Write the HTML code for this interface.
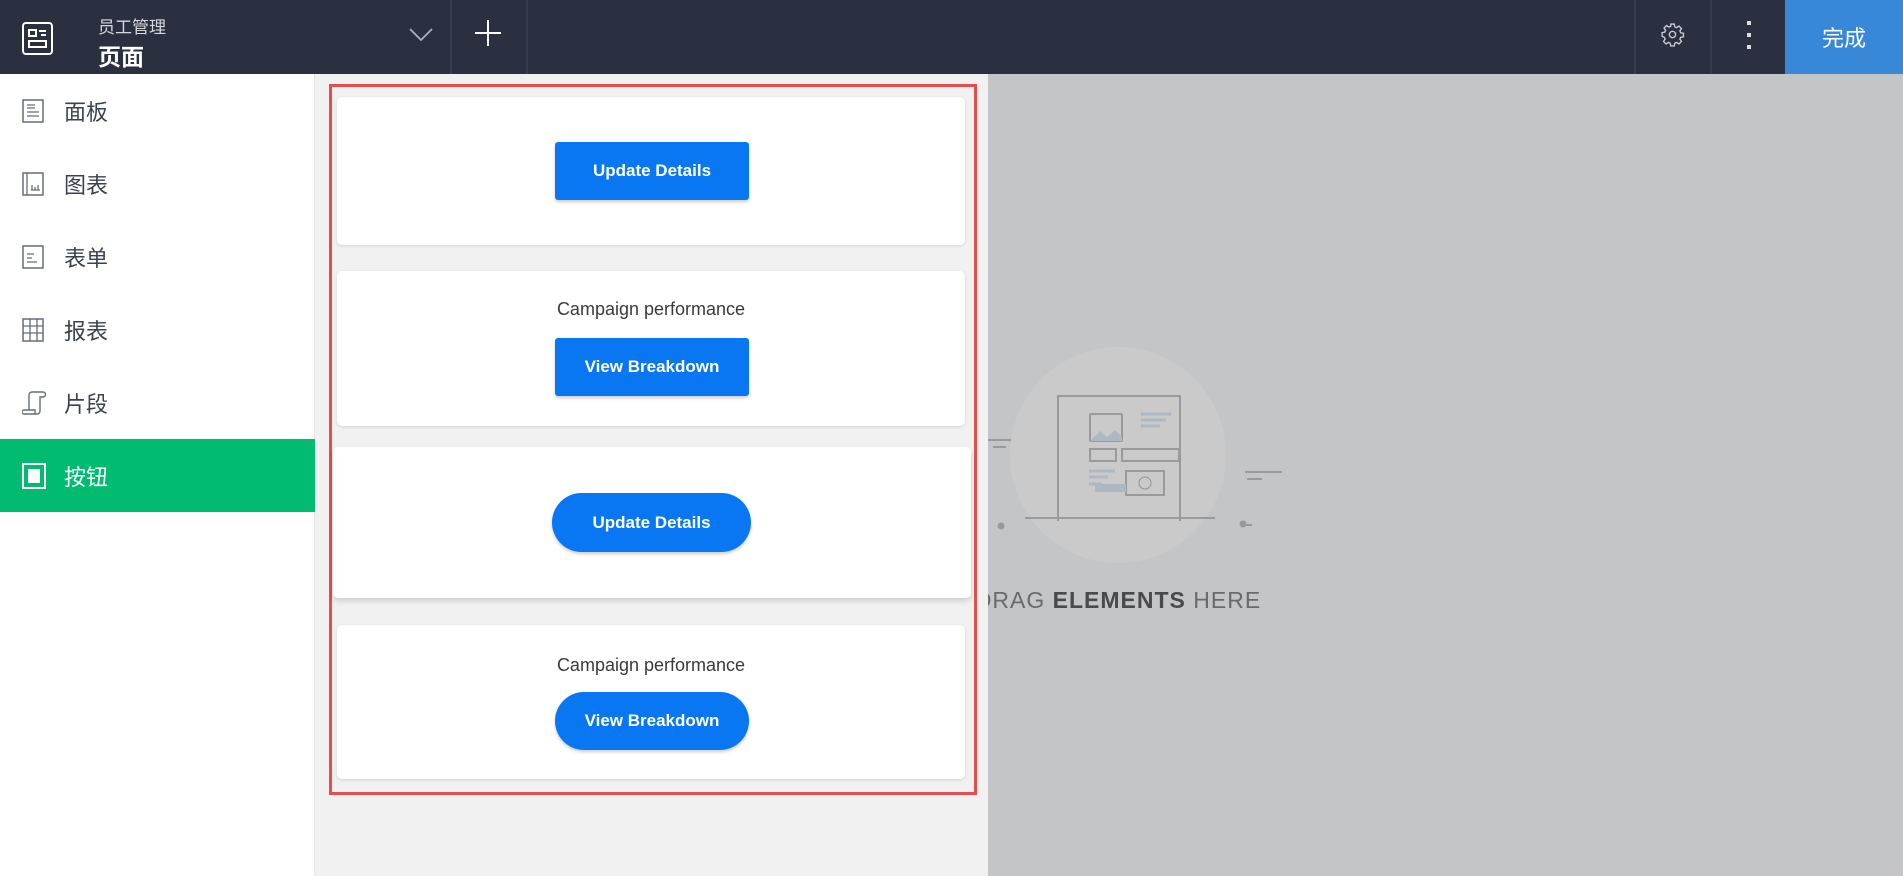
<!DOCTYPE html>
<html><head><meta charset="utf-8"><style>
*{box-sizing:border-box;margin:0;padding:0}
body{width:1903px;height:876px;overflow:hidden;position:relative;font-family:"Liberation Sans","Noto Sans CJK SC",sans-serif;background:#c4c5c7}
.hdr{position:absolute;left:0;top:0;width:1903px;height:74px;background:#2a3040;color:#fff}
.vd{position:absolute;top:0;width:2px;height:74px;background:#353c4e}
.side{position:absolute;left:0;top:74px;width:315px;height:802px;background:#fff;border-right:1px solid #e4e4e4}
.item{position:absolute;left:0;width:315px;height:73px;display:flex;align-items:center;font-size:22px;color:#3c4150}
.item svg{position:absolute;left:22px}
.item span{position:absolute;left:64px}
.item.act{background:#00bb70;color:#fff}
.panel{position:absolute;left:315px;top:74px;width:673px;height:802px;background:#f1f1f1;z-index:2}
.red{position:absolute;left:329px;top:84px;width:648px;height:711px;border:3px solid #e84c4c;z-index:3}
.card{position:absolute;background:#fff;border-radius:5px;box-shadow:0 1px 3px rgba(0,0,0,.12);z-index:3;text-align:center}
.btn{position:absolute;background:#0a77f2;color:#fff;font-weight:bold;font-size:17px;display:flex;align-items:center;justify-content:center;border-radius:3px;box-shadow:0 2px 3px rgba(0,0,0,.2)}
.cap{position:absolute;left:0;width:100%;font-size:18px;color:#3a3a3a}
</style></head><body>
<div class="hdr">
 <svg style="position:absolute;left:22px;top:22px" width="31" height="33" viewBox="0 0 31 33"><rect x="1" y="1" width="29" height="31" rx="3" fill="none" stroke="#fff" stroke-width="2"/><rect x="7" y="8" width="7" height="6" fill="none" stroke="#fff" stroke-width="2"/><path d="M17 9h7M19 13h5" stroke="#fff" stroke-width="2"/><rect x="7" y="19" width="17" height="6" fill="none" stroke="#fff" stroke-width="2"/></svg>
 <div style="position:absolute;left:98px;top:13px;font-size:17px;color:#d6d8de">员工管理</div>
 <div style="position:absolute;left:98px;top:38px;font-size:23px;font-weight:bold">页面</div>
 <svg style="position:absolute;left:409px;top:28px" width="24" height="14"><path d="M1 1l11 11L23 1" fill="none" stroke="#aab0bc" stroke-width="1.8"/></svg>
 <div class="vd" style="left:450px"></div>
 <svg style="position:absolute;left:475px;top:20px" width="26" height="26"><path d="M13 0v26M0 13h26" stroke="#fff" stroke-width="2"/></svg>
 <div class="vd" style="left:526px"></div>
 <div class="vd" style="left:1634px"></div>
 <svg style="position:absolute;left:1660px;top:22px" width="25" height="25" viewBox="0 0 24 24"><path d="M10.3 2h3.4l.5 2.6 1.8.8 2.2-1.5 2.4 2.4-1.5 2.2.8 1.8 2.6.5v3.4l-2.6.5-.8 1.8 1.5 2.2-2.4 2.4-2.2-1.5-1.8.8-.5 2.6h-3.4l-.5-2.6-1.8-.8-2.2 1.5-2.4-2.4 1.5-2.2-.8-1.8L2 13.7v-3.4l2.6-.5.8-1.8-1.5-2.2 2.4-2.4 2.2 1.5 1.8-.8z" fill="none" stroke="#c8ccd4" stroke-width="1.3"/><circle cx="12" cy="12" r="3" fill="none" stroke="#c8ccd4" stroke-width="1.3"/></svg>
 <div class="vd" style="left:1710px"></div>
 <div style="position:absolute;left:1747px;top:21px;width:4px;height:4px;background:#ddd;box-shadow:0 12px 0 #ddd,0 24px 0 #ddd"></div>
 <div style="position:absolute;left:1785px;top:0;width:118px;height:74px;background:#3788d8;font-size:22px;display:flex;align-items:center;justify-content:center">完成</div>
</div>
<div class="side">
 <div class="item" style="top:0"><svg width="22" height="24"><rect x="1" y="1" width="20" height="22" fill="none" stroke="#666c78" stroke-width="1.5"/><path d="M5 6h8M5 9h8M5 13h12M5 17h12" stroke="#666c78" stroke-width="1.3"/></svg><span>面板</span></div>
 <div class="item" style="top:73px"><svg width="22" height="24"><rect x="1" y="1" width="20" height="22" fill="none" stroke="#666c78" stroke-width="1.5"/><path d="M5 1v22M10 18V13M13 18v-3M16 18v-5M9 18h9" stroke="#666c78" stroke-width="1.3"/></svg><span>图表</span></div>
 <div class="item" style="top:146px"><svg width="22" height="24"><rect x="1" y="1" width="20" height="22" fill="none" stroke="#666c78" stroke-width="1.5"/><path d="M5 9h7M5 13h5M5 17h10" stroke="#666c78" stroke-width="1.3"/></svg><span>表单</span></div>
 <div class="item" style="top:219px"><svg width="22" height="24"><rect x="1" y="1" width="20" height="22" fill="none" stroke="#666c78" stroke-width="1.5"/><path d="M1 8h20M1 15h20M8 1v22M15 1v22" stroke="#666c78" stroke-width="1.3"/></svg><span>报表</span></div>
 <div class="item" style="top:292px"><svg width="24" height="24"><path d="M7 19V4a3 3 0 0 1 3-3h11a2 2 0 0 1 0 5h-3v14a3 3 0 0 1-3 3H2a2 2 0 0 1 0-4h11v4" fill="none" stroke="#666c78" stroke-width="1.4"/></svg><span>片段</span></div>
 <div class="item act" style="top:365px"><svg width="24" height="26"><rect x="1" y="1" width="22" height="24" fill="none" stroke="#fff" stroke-width="2"/><rect x="6" y="6" width="12" height="14" fill="#fff"/></svg><span>按钮</span></div>
</div>
<svg style="position:absolute;left:988px;top:74px" width="915" height="802">
 <circle cx="130" cy="381" r="108" fill="#cacacb"/>
 <g stroke="#9a9a9a" stroke-width="2" fill="none">
  <path d="M70 447V322h122v125"/>
  <path d="M37 444h190"/>
  <rect x="102" y="340" width="32" height="27" rx="1"/>
  <rect x="102" y="375" width="26" height="12"/>
  <rect x="134" y="375" width="57" height="12"/>
  <rect x="138" y="397" width="38" height="24"/>
  <circle cx="157" cy="409" r="6" stroke-width="1.2"/>
  <path d="M0 366h23M5 373h13M257 398h37M259 405h15M255 451h9"/>
 </g>
 <path d="M103 366l9-9 7 6 8-7 7 7v4h-31z" fill="#aeb8c3"/>
 <path d="M153 340h30M153 346h25M153 352h19M101 397h26M101 403h19M101 410h13" stroke="#aeb8c3" stroke-width="3"/>
 <rect x="107" y="410" width="31" height="8" fill="#aeb8c3"/>
 <circle cx="13" cy="452" r="3.5" fill="#999"/><circle cx="255" cy="450" r="3.5" fill="#999"/>
 <text x="130" y="534" text-anchor="middle" font-family="Liberation Sans,sans-serif" font-size="23" fill="#6a6a6a" letter-spacing="1">DRAG <tspan font-weight="bold" fill="#4a4a4a">ELEMENTS</tspan> HERE</text>
</svg>
<div class="panel"></div>
<div class="red"></div>
<div class="card" style="left:337px;top:97px;width:628px;height:148px"><div class="btn" style="left:218px;top:45px;width:194px;height:58px">Update Details</div></div>
<div class="card" style="left:337px;top:271px;width:628px;height:155px"><div class="cap" style="top:28px">Campaign performance</div><div class="btn" style="left:218px;top:67px;width:194px;height:58px">View Breakdown</div></div>
<div class="card" style="left:333px;top:447px;width:638px;height:151px;box-shadow:0 3px 6px rgba(0,0,0,.15)"><div class="btn" style="left:219px;top:46px;width:199px;height:59px;border-radius:30px">Update Details</div></div>
<div class="card" style="left:337px;top:625px;width:628px;height:154px"><div class="cap" style="top:30px">Campaign performance</div><div class="btn" style="left:218px;top:67px;width:194px;height:58px;border-radius:30px">View Breakdown</div></div>
</body></html>
